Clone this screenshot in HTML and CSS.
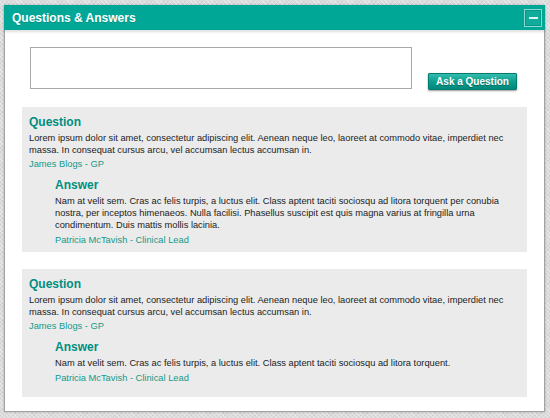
FILE: index.html
```html
<!DOCTYPE html>
<html lang="en">
<head>
<meta charset="utf-8">
<title>Questions &amp; Answers</title>
<link rel="stylesheet" href="styles.css">
</head>
<body>
<section class="panel">
  <header class="panel-head">
    <h1 class="panel-title">Questions &amp; Answers</h1>
    <button class="minimize" type="button" aria-label="Minimize"><span class="minimize-bar"></span></button>
  </header>
  <div class="panel-body">
    <form class="ask-form">
      <textarea class="ask-input" aria-label="Your question"></textarea>
      <button class="ask-button" type="button">Ask a Question</button>
    </form>
    <article class="qa-card">
      <h2 class="qa-heading">Question</h2>
      <p class="qa-text">Lorem ipsum dolor sit amet, consectetur adipiscing elit. Aenean neque leo, laoreet at commodo vitae, imperdiet nec massa. In consequat cursus arcu, vel accumsan lectus accumsan in.</p>
      <p class="qa-author">James Blogs - GP</p>
      <div class="answer">
        <h3 class="qa-heading answer-heading">Answer</h3>
        <p class="qa-text">Nam at velit sem. Cras ac felis turpis, a luctus elit. Class aptent taciti sociosqu ad litora torquent per conubia nostra, per inceptos himenaeos. Nulla facilisi. Phasellus suscipit est quis magna varius at fringilla urna condimentum. Duis mattis mollis lacinia.</p>
        <p class="qa-author answer-author">Patricia McTavish - Clinical Lead</p>
      </div>
    </article>
    <article class="qa-card qa-card-last">
      <h2 class="qa-heading">Question</h2>
      <p class="qa-text">Lorem ipsum dolor sit amet, consectetur adipiscing elit. Aenean neque leo, laoreet at commodo vitae, imperdiet nec massa. In consequat cursus arcu, vel accumsan lectus accumsan in.</p>
      <p class="qa-author">James Blogs - GP</p>
      <div class="answer">
        <h3 class="qa-heading answer-heading">Answer</h3>
        <p class="qa-text">Nam at velit sem. Cras ac felis turpis, a luctus elit. Class aptent taciti sociosqu ad litora torquent.</p>
        <p class="qa-author answer-author">Patricia McTavish - Clinical Lead</p>
      </div>
    </article>
  </div>
</section>
</body>
</html>
```

FILE: styles.css
```css
* { box-sizing: border-box; }

html, body {
  margin: 0;
  padding: 0;
}

body {
  width: 550px;
  height: 418px;
  overflow: hidden;
  padding: 5px 5px 0 4px;
  font-family: "Liberation Sans", Arial, Helvetica, sans-serif;
  color: #222;
  background-color: #dcdcdc;
  background-image:
    repeating-linear-gradient(45deg, rgba(255,255,255,0.35) 0 1px, transparent 1px 3px),
    repeating-linear-gradient(-45deg, rgba(0,0,0,0.05) 0 1px, transparent 1px 3px);
}

.panel {
  width: 541px;
  height: 407px;
  background: #fff;
  border: 1px solid #a2a2a2;
  border-top: 0;
  box-shadow: 0 0 2px rgba(0,0,0,0.25);
  display: flex;
  flex-direction: column;
}

.panel-head {
  height: 25px;
  margin: 0 -1px;
  background: #00a796;
  display: flex;
  align-items: center;
  justify-content: space-between;
  padding: 0 3px 0 8px;
  box-shadow: 0 2px 2px rgba(0,0,0,0.12);
  position: relative;
}

.panel-title {
  margin: 0;
  font-size: 12px;
  font-weight: bold;
  color: #fff;
  text-shadow: 0 1px 0 rgba(0,0,0,0.15);
  letter-spacing: 0;
}

.minimize {
  width: 18px;
  height: 18px;
  padding: 0;
  margin: 0;
  border: 1px solid #8fd8cf;
  background: #10ab9b;
  box-shadow: inset 0 0 0 1px #009a89;
  display: flex;
  align-items: center;
  justify-content: center;
  cursor: pointer;
}

.minimize-bar {
  display: block;
  width: 9px;
  height: 2px;
  background: #dff4f1;
}

.panel-body {
  flex: 1;
  padding: 17px 17px 0 17px;
  display: flex;
  flex-direction: column;
  gap: 17px;
}

.ask-form {
  display: flex;
  align-items: flex-end;
  padding: 0 0 0 8px;
  margin: 0;
  height: 43px;
}

.ask-input {
  width: 382px;
  height: 42px;
  margin: 0 0 1px 0;
  border: 1px solid #a8a8a8;
  resize: none;
  background: #fff;
  font-family: inherit;
}

.ask-button {
  margin-left: 16px;
  width: 89px;
  height: 17px;
  padding: 0;
  border: 1px solid #007b6e;
  border-radius: 1px;
  background: linear-gradient(#33bcad, #0a9b8b 55%, #00897a);
  box-shadow: 0 1px 2px rgba(0,0,0,0.4);
  color: #fff;
  font-family: inherit;
  font-size: 10px;
  font-weight: bold;
  text-shadow: 0 1px 0 rgba(0,0,0,0.3);
  cursor: pointer;
}

.qa-card {
  background: #ebebeb;
  padding: 7px 20px 6px 7px;
}

.qa-card-last {
  padding-bottom: 13px;
}

.qa-heading {
  margin: 0;
  font-size: 12px;
  line-height: 16px;
  font-weight: bold;
  color: #008e80;
}

.qa-text {
  margin: 2px 0 0 0;
  font-size: 9.3px;
  line-height: 12px;
  color: #222;
}

.qa-author {
  margin: 2px 0 0 0;
  font-size: 9.3px;
  line-height: 12px;
  color: #13998a;
}

.answer {
  margin: 7px 0 0 26px;
}

.answer-author {
  margin-top: 3px;
}
```
